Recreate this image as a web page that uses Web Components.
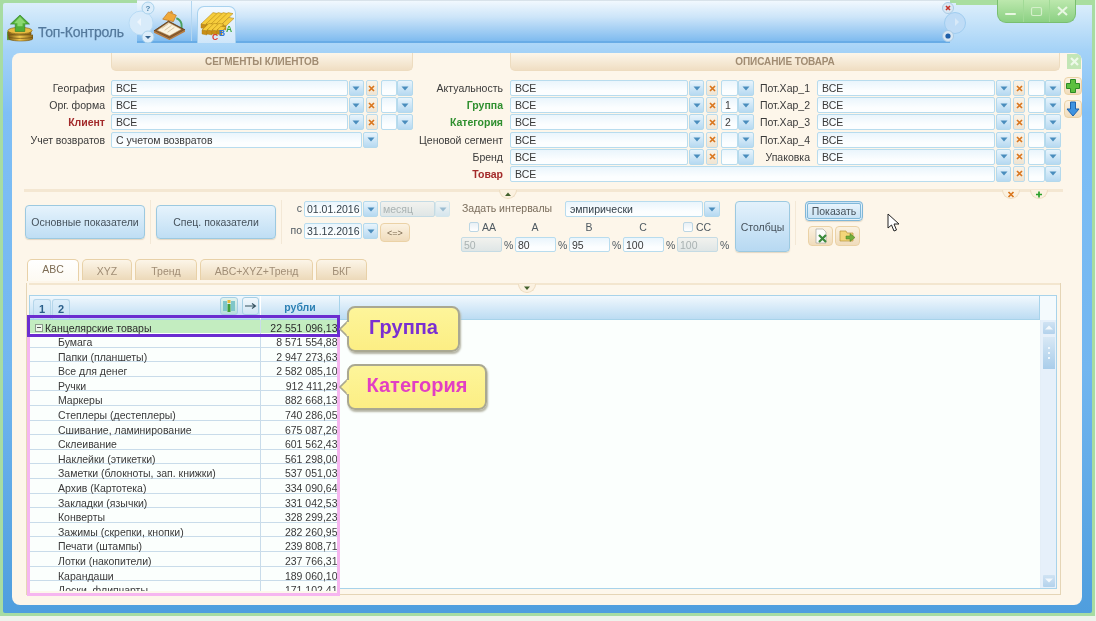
<!DOCTYPE html>
<html lang="ru"><head><meta charset="utf-8"><title>Топ-Контроль</title>
<style>html,body{margin:0;padding:0;background:#eef3ec;overflow:hidden}</style></head>
<body><top-app></top-app>
<script>
const BASE=`*{box-sizing:border-box}:host{font:10.5px "Liberation Sans",Arial,sans-serif;color:#3a3a3a}`;
const TRI=`<svg width="8" height="5" viewBox="0 0 8 5"><path d="M0.5 0.5H7.5L4 4.5Z" fill="#4a8dbd"/></svg>`;
function def(name,css,render){customElements.define(name,class extends HTMLElement{
  connectedCallback(){if(this.shadowRoot)return;const s=this.attachShadow({mode:'open'});
  const a=n=>this.getAttribute(n);s.innerHTML=`<style>${BASE}${css}</style>`+render(a,this);}});}

def('combo-button',`:host{display:flex;align-items:center;justify-content:center;height:100%;width:15px;flex:none;border:1px solid #b4d9ec;border-radius:2px;background:linear-gradient(#e8f4fc,#b6d9f1)}`,()=>TRI);
def('clear-button',`:host{display:flex;align-items:center;justify-content:center;height:100%;width:12px;flex:none;border:1px solid #bcdcec;border-radius:2px;background:linear-gradient(#f9f3e8,#efe4d2)}`,
 ()=>`<svg width="7" height="7" viewBox="0 0 7 7"><path d="M1 1L6 6M6 1L1 6" stroke="#d9761e" stroke-width="1.7"/></svg>`);
def('text-field',`:host{display:flex;align-items:center;height:100%;flex:none;border:1px solid #b8dcee;border-radius:2px;background:linear-gradient(#eaf5fc,#fcfeff 70%);padding-left:4px;white-space:nowrap;overflow:hidden}
 :host([disabled]){background:linear-gradient(#f2f2ee,#dfe6e6);color:#a9b2b2!important;border-color:#c5dbe4;padding-left:2px}`,(a)=>`<slot></slot>`);

def('filter-row',`:host{display:flex;align-items:stretch;height:16px;margin-bottom:1.2px}
 .l{flex:none;text-align:right;line-height:16.5px;white-space:nowrap}.b{font-weight:bold}
 combo-button{margin-left:1px}clear-button{margin-left:2px}.sm{margin-left:3px;display:flex;height:100%}.sm text-field{width:16.5px;padding-left:3px}
 .sm combo-button{margin-left:0;width:16px}`,
 a=>{const lw=a('lw')||93,w=a('w')||178,gap=a('gap')||6;
 return `<span class="l ${a('c')?'b':''}" style="width:${lw}px;margin-right:${gap}px;color:${a('c')||'inherit'}">${a('label')}</span>
 <text-field style="width:${w}px">${a('value')||'ВСЕ'}</text-field><combo-button></combo-button>
 ${a('plain')!==null?'':`<clear-button></clear-button><div class="sm"><text-field>${a('n')||''}</text-field><combo-button></combo-button></div>`}`});

def('section-head',`:host{display:flex;align-items:center;justify-content:center;height:18px;flex:none;font-weight:bold;color:#a18c72;font-size:10px;letter-spacing:-.1px;
 background:linear-gradient(#fcf6ea,#f0dec3);border:1px solid #eddcc0;border-top:0;border-radius:0 0 5px 5px}`,()=>`<slot></slot>`);

def('divider-bar',`:host{display:block;position:relative;height:3px;background:#f4e7d2}
 i{position:absolute;top:1px;width:18px;height:9px;background:#fbf1e0;border:1px solid #eddcc0;border-top:0;border-radius:0 0 9px 9px;display:flex;align-items:center;justify-content:center}`,
 a=>(a('bumps')||'').split(';').filter(Boolean).map(b=>{const [x,k]=b.split(',');
  const ic=k=='up'?`<path d="M1 5L4 1.5L7 5Z" fill="#41602c"/>`:k=='down'?`<path d="M1 1.5H7L4 5Z" fill="#41602c"/>`:k=='x'?`<path d="M1.5 1L6.5 6M6.5 1L1.5 6" stroke="#d9761e" stroke-width="1.7"/>`:`<path d="M4 .5V6.5M1 3.5H7" stroke="#2aa02a" stroke-width="1.7"/>`;
  return `<i style="left:${x}px"><svg width="8" height="7" viewBox="0 0 8 7">${ic}</svg></i>`}).join(''));

def('blue-button',`:host{display:flex;align-items:center;justify-content:center;flex:none;border:1px solid #9cc9e0;border-radius:4px;background:linear-gradient(#e6f3fc,#bfdef4);color:#46525c;font-size:10.5px;box-shadow:0 1px 1px #e3d8c4}`,()=>`<slot></slot>`);
def('tan-button',`:host{display:flex;align-items:center;justify-content:center;flex:none;border:1px solid #ebd2a6;border-radius:4px;background:linear-gradient(#fbf2e2,#f0dcbc);color:#7c6a50;font-size:9px}`,()=>`<slot></slot>`);
def('check-label',`:host{display:flex;align-items:center;justify-content:center;width:54px;height:14px;flex:none;color:#4f5a62;padding-right:14px}
 :host([check]){justify-content:flex-start;padding:0 0 0 8px}
 i{display:block;width:10px;height:10px;border:1px solid #bcd6e4;border-radius:2px;background:linear-gradient(#e8f0f5,#fff);margin-right:3px}`,
 a=>(a('check')!==null?'<i></i>':'')+`<slot></slot>`);
def('pct-input',`:host{display:flex;align-items:center;height:15px;width:54px;flex:none}text-field{width:41px;padding-left:2px}span{margin-left:2px;color:#4f5a62}`,
 a=>`<text-field ${a('disabled')!==null?'disabled':''}>${a('value')}</text-field><span>%</span>`);

def('tab-item',`:host{display:flex;align-items:center;justify-content:center;height:21px;flex:none;margin-right:3px;border:1px solid #e8d1a8;border-bottom:0;border-radius:5px 5px 0 0;background:linear-gradient(#fcf5e8,#ecd9b9);color:#a08d75;padding-top:2px}
 :host([active]){background:linear-gradient(#fff,#fdfaf2);color:#7d6c54;padding:0 0 3px;height:22px;margin-bottom:-1px}`,()=>`<slot></slot>`);

def('data-row',`:host{display:grid;grid-template-columns:231px 78px;height:14.6px;flex:none;line-height:18px;border-bottom:1px solid #c9dcea;color:#3a3a3a}
 :host([group]){height:13.5px;background:#c3edc0;line-height:16px;border-bottom:0;color:#2c2c2c}
 .n{padding-left:28px;white-space:nowrap;overflow:hidden;display:flex;align-items:flex-start;border-right:1px solid #c9dcea;height:100%}
 :host([group]) .n{padding-left:5px;overflow:visible}
 .v{text-align:right;padding-right:1.5px;white-space:nowrap}
 i{display:block;width:8px;height:8px;border:1px solid #8a9a8a;background:#eef7ec;margin:4px 2px 0 0;position:relative;flex:none}
 i:after{content:"";position:absolute;left:1px;right:1px;top:2.5px;height:1px;background:#555}`,
 a=>`<div class="n">${a('group')!==null?'<i></i>':''}<span>${a('name')}</span></div><div class="v">${a('value')}</div>`);

def('call-out',`:host{display:flex;align-items:center;justify-content:center;position:absolute;border:2px solid #a9a892;border-radius:8px;background:linear-gradient(#fdf59a,#fcee84);font:bold 20px "Liberation Sans",Arial,sans-serif;box-shadow:1px 2px 2px #b5b5a5;padding-bottom:4px}
 svg{position:absolute;left:-10px;top:50%;margin-top:-9px}`,
 a=>`<svg width="10" height="18" viewBox="0 0 10 18"><path d="M10 0L1 9L10 18Z" fill="#fcf296" stroke="#a9a892" stroke-width="1.6"/><path d="M9 2V16" stroke="#fcf296" stroke-width="2.5"/></svg><slot></slot>`);

def('scroll-bar',`:host{display:flex;flex-direction:column;width:16px;flex:none;background:#e6f0fa;border-left:1px solid #e4eef7;padding:2px 1px 1px 2px}
 .bt{height:12.5px;background:linear-gradient(#d0e3f3,#b3d2ec);border-radius:1px;display:flex;align-items:center;justify-content:center}
 .th{height:32px;margin-top:3px;background:linear-gradient(#d8e8f5,#a9cdea);display:flex;flex-direction:column;align-items:center;justify-content:center;gap:3px}
 .th b{display:block;width:2px;height:2px;background:#eef6fc}.sp{flex:1}`,
 ()=>`<div class="bt"><svg width="8" height="5"><path d="M0 4.5H8L4 .5Z" fill="#f3f8fc"/></svg></div><div class="th"><b></b><b></b><b></b></div><div class="sp"></div><div class="bt"><svg width="8" height="5"><path d="M0 .5H8L4 4.5Z" fill="#f3f8fc"/></svg></div>`);

def('data-grid',`:host{display:flex;flex-direction:column;width:1028px;height:294.5px;margin:10px 0 0 2px;border:1px solid #a8d3ea;background:#fbfffd}
 .hd{display:flex;height:24px;flex:none}
 .c1{width:231px;flex:none;background:linear-gradient(#f1f8fd,#bcdcf3);border-right:1px solid #fff;border-bottom:1px solid #a8d3ea;display:flex;align-items:flex-end;padding:0 0 0 3px;position:relative}
 .c2{width:78px;flex:none;background:linear-gradient(#f1f8fd,#bcdcf3);border-bottom:1px solid #a8d3ea;text-align:center;color:#2c80b4;font-weight:bold;padding-top:5px}
 .c3{flex:1;background:linear-gradient(#f1f8fd,#bcdcf3);border-left:1px solid #a8d3ea;border-right:1px solid #a8d3ea;border-bottom:1px solid #a8d3ea}
 .c4{width:16px;flex:none;background:#f4fafd}
 .lv{width:18px;height:20px;margin-right:1px;border:1px solid #b5d6ea;border-bottom:0;border-radius:3px 3px 0 0;background:linear-gradient(#dceefa,#c3dff3);font-weight:bold;font-size:11px;color:#2b5f8a;display:flex;align-items:center;justify-content:center}
 .sp{flex:1}
 .ib{width:18px;height:18px;border:1px solid #a6cfe4;border-radius:3px;margin:0 0 4px 4px;display:flex;align-items:center;justify-content:center;background:linear-gradient(#f2f8fc,#cfe5f4)}
 .ib+.ib{margin-right:1px;width:17px}
 .bd{display:flex;flex:1;min-height:0}.rows{width:309px;flex:none;height:calc(100% + 2.5px);overflow:hidden;display:flex;flex-direction:column;background:#fbfffd}.e{flex:1}`,
 (a)=>{const R=[["Бумага","8 571 554,88"],["Папки (планшеты)","2 947 273,63"],["Все для денег","2 582 085,10"],["Ручки","912 411,29"],["Маркеры","882 668,13"],["Степлеры (дестеплеры)","740 286,05"],["Сшивание, ламинирование","675 087,26"],["Склеивание","601 562,43"],["Наклейки (этикетки)","561 298,00"],["Заметки (блокноты, зап. книжки)","537 051,03"],["Архив (Картотека)","334 090,64"],["Закладки (язычки)","331 042,53"],["Конверты","328 299,23"],["Зажимы (скрепки, кнопки)","282 260,95"],["Печати (штампы)","239 808,71"],["Лотки (накопители)","237 766,31"],["Карандаши","189 060,10"],["Доски, флипчарты","171 102,41"]];
 return `<div class="hd"><div class="c1"><div class="lv">1</div><div class="lv">2</div><div class="sp"></div>
 <div class="ib" style="background:linear-gradient(#e2f3ee,#b6dfdc)"><svg width="14" height="14" viewBox="0 0 14 14"><rect x="1" y="2" width="4" height="10" fill="#7fc6c9"/><rect x="9" y="2" width="4" height="10" fill="#7fc6c9"/><rect x="5.5" y="1" width="3" height="3" fill="#e8b93a"/><rect x="5.5" y="5" width="3" height="8" fill="#3f9e3a"/></svg></div>
 <div class="ib"><svg width="13" height="8" viewBox="0 0 13 8"><path d="M1 4H11M8 1.5L11.5 4L8 6.5" fill="none" stroke="#33505f" stroke-width="1.1"/></svg></div></div>
 <div class="c2">рубли</div><div class="c3"></div><div class="c4"></div></div>
 <div class="bd"><div class="rows"><data-row group name="Канцелярские товары" value="22 551 096,13"></data-row>
 ${R.map(r=>`<data-row name="${r[0]}" value="${r[1]}"></data-row>`).join('')}</div><div class="e"></div><scroll-bar></scroll-bar></div>`});

const LOGO=`<svg width="26" height="28" viewBox="0 0 30 30"><defs><linearGradient id="g" x1="0" x2="1"><stop offset="0" stop-color="#7c5c16"/><stop offset=".45" stop-color="#f3c94e"/><stop offset="1" stop-color="#8e6818"/></linearGradient></defs>
 <path d="M0 19H7V29H0Z" fill="#5e9a3c"/><path d="M1 18h27v5c0 2-6 3-13 3s-14-1-14-3Z" fill="url(#g)"/><path d="M2 23h28v4c0 2-7 3-14 3s-14-1-14-3Z" fill="url(#g)" stroke="#6b4e14" stroke-width=".6"/>
 <ellipse cx="15" cy="18" rx="14" ry="3.8" fill="#e8bb3e" stroke="#7c5c16" stroke-width=".7"/><path d="M2 21.5c4 2 21 2 26 0M2 25.5c5 2 22 2 28 0" stroke="#6b4e14" stroke-width=".8" fill="none"/>
 <path d="M15 0L26 10.5H20.5V19H9.5V10.5H4Z" fill="#4fae37" stroke="#2f7d24" stroke-width=".7"/><path d="M15 2L22 9.5H18V13H12V9.5H8Z" fill="#8ad870"/></svg>`;
const BOOK=`<svg width="33" height="30" viewBox="0 0 34 30"><path d="M24 8C30 10 31 17 28 22" fill="none" stroke="#4aa060" stroke-width="2"/><path d="M24 5L16 1.5L10 9L21 11.5Z" fill="#f0a93a" stroke="#b9701a" stroke-width=".7"/><path d="M17 2L19 0L21 3Z" fill="#d98d28"/>
 <path d="M1 21L16 11L33 20L17 29Z" fill="#8a5a2a" stroke="#5a3a18" stroke-width=".8"/><path d="M4.5 20.5L16 12.5L29 19.5L17 26Z" fill="#fbf3df" stroke="#c9b48e" stroke-width=".5"/><path d="M9 18.5l7-5M12 20.5l7-5M15 22.5l7-5" stroke="#c3b08c" stroke-width=".7"/><path d="M1 21L17 29L33 20V22L17 30.5L1 23Z" fill="#b87c40"/></svg>`;
const bar=(x,y,l)=>`<path d="M${x} ${y}L${x+l} ${y-l*.95}L${x+l+5} ${y-l*.95+1}L${x+5} ${y+1}Z" fill="#f6cd3c" stroke="#a87c12" stroke-width=".5"/><path d="M${x} ${y}L${x+5} ${y+1}V${y+5}L${x} ${y+4}Z" fill="#c98f18" stroke="#a87c12" stroke-width=".4"/>`;
const BARS=`<svg width="36" height="33" viewBox="0 0 36 33">${bar(2,15,12)}${bar(7,15,12)}${bar(12,15,12)}${bar(17,15,12)}${bar(22,16,8)}${bar(3,21,7)}${bar(8,21,7)}${bar(13,21,7)}${bar(18,21,4)}
 <g font-family="Liberation Sans" font-weight="bold" font-size="8.5"><text x="27" y="23" fill="#35a535">A</text><text x="20" y="27" fill="#2f76d6">B</text><text x="13" y="31" fill="#e0352a">C</text></g></svg>`;

def('title-bar',`:host{display:flex;height:50px;position:relative;flex:none}
 .lg{width:134px;flex:none;display:flex;align-items:flex-start;padding:10.5px 0 0 4px}
 .lg span{font-size:14px;color:#54799c;margin:10px 0 0 5px;white-space:nowrap;letter-spacing:-.2px;-webkit-text-stroke:.25px #54799c}
 .st{width:813px;flex:none;height:43px;margin-top:-3px;background:linear-gradient(#f1f8fe,#cde5f9 40%,#7fbbef);border-bottom:2px solid #68ace6;border-top:1px solid #d8e2ea;display:flex;padding-left:16px;position:relative}
 .t1{width:38px;padding-top:9px;flex:none}
 .sep{width:1px;background:#b3d6f0;flex:none;margin-right:5px}
 .t2{width:39px;flex:none;height:37px;margin-top:5px;border:1px solid #a8d2ef;border-bottom:0;border-radius:7px 7px 0 0;background:linear-gradient(#f4fafe,#cfe6f9);padding:2px 0 0 1px;margin-bottom:-2px}
 .nav{position:absolute;display:block}
 .wb{position:absolute;left:994px;top:-3px;width:79px;height:23px;display:flex;border-radius:0 0 9px 9px;border:1px solid #79bf70;border-top:0;background:linear-gradient(#bce8ad,#8bd083)}
 .wb div{flex:1;display:flex;align-items:center;justify-content:center;border-right:1px solid #a1da96}.wb div:last-child{border:0}
 .gr{position:absolute;left:953px;right:-3px;top:-3px;height:5px;background:#a9de9f}`,
 ()=>`<div class="lg">${LOGO}<span>Топ-Контроль</span></div>
 <div class="st"><div class="t1">${BOOK}</div><div class="sep"></div><div class="t2">${BARS}</div></div>
 <svg class="nav" style="left:123px;top:-3px" width="34" height="48" viewBox="0 0 34 48"><circle cx="15" cy="23" r="12" fill="#d8ebfa" stroke="#b8dbf5"/><path d="M15 18L11 22L15 26Z" fill="#eef6fd"/><circle cx="22" cy="8" r="6" fill="#dcedfa" stroke="#a9d2ec"/><text x="22" y="11" text-anchor="middle" font-family="Liberation Sans" font-size="8" font-weight="bold" fill="#4a7fa8">?</text><circle cx="22" cy="37" r="6" fill="#dcedfa" stroke="#a9d2ec"/><path d="M19 36H25L22 39Z" fill="#33608a"/></svg>
 <svg class="nav" style="left:930px;top:-3px" width="34" height="48" viewBox="0 0 34 48"><circle cx="22" cy="23" r="10.5" fill="#bfdcf6" stroke="#a0cdf0"/><path d="M22 18L26 22L22 26Z" fill="#d8e9f8"/><circle cx="15" cy="8" r="5.5" fill="#d9e7f3" stroke="#a9cbe5"/><path d="M13 6L17 10M17 6L13 10" stroke="#c8322a" stroke-width="1.6"/><circle cx="15" cy="36" r="5.5" fill="#d9e7f3" stroke="#a9cbe5"/><circle cx="15" cy="36" r="2.6" fill="#1f5fa8"/></svg>
 <div class="gr"></div>
 <div class="wb"><div><svg width="13" height="10"><rect x="1" y="7" width="11" height="2" rx="1" fill="#e8f7e2"/></svg></div><div><svg width="13" height="11"><rect x="1.5" y="1.5" width="10" height="8" rx="1.5" fill="none" stroke="#d4efca" stroke-width="1.2"/></svg></div><div><svg width="13" height="12"><path d="M2 2L11 10M11 2L2 10" stroke="#e8f7e2" stroke-width="2.1"/></svg></div></div>`);

def('filter-panel',`:host{display:block}
 .hs{display:flex;height:18px;padding-left:99px}
 .cl{width:14px;height:15px;margin:1px 0 0 7px;background:#c3e6b6;display:flex;align-items:center;justify-content:center}
 .f{display:flex;margin-top:9px;height:102px;align-items:flex-start}
 .col1{width:401px;flex:none}.wr{flex:none;width:648px}.two{display:flex}
 .side{width:18px;margin:-3px 0 0 2.5px;display:flex;flex-direction:column;gap:5px}
 .side tan-button{height:18px;width:18.5px}
 divider-bar{margin:7px 19px 0 12px}`,
 ()=>{const two=(a,b)=>`<div class="two"><filter-row lw="90" gap="7" ${a}></filter-row><filter-row lw="56.5" gap="7" ${b}></filter-row></div>`;
 return `<div class="hs"><section-head style="width:302px">СЕГМЕНТЫ КЛИЕНТОВ</section-head><section-head style="width:550px;margin-left:97px">ОПИСАНИЕ ТОВАРА</section-head>
 <div class="cl"><svg width="11" height="11"><path d="M2 2L9 9M9 2L2 9" stroke="#eef9ea" stroke-width="2.2"/></svg></div></div>
 <div class="f"><div class="col1"><filter-row w="236.5" label="География"></filter-row><filter-row w="236.5" label="Орг. форма"></filter-row><filter-row w="236.5" c="#a32a2a" label="Клиент"></filter-row><filter-row w="251" plain label="Учет возвратов" value="С учетом возвратов"></filter-row></div>
 <div class="wr">${two('label="Актуальность"','label="Пот.Хар_1"')}${two('c="#2f8f2f" label="Группа" n="1"','label="Пот.Хар_2"')}${two('c="#2f8f2f" label="Категория" n="2"','label="Пот.Хар_3"')}${two('label="Ценовой сегмент"','label="Пот.Хар_4"')}${two('label="Бренд"','label="Упаковка"')}
 <filter-row lw="90" gap="7" w="485" c="#a32a2a" label="Товар"></filter-row></div>
 <div class="side"><tan-button><svg width="16" height="16" viewBox="0 0 16 16"><path d="M5.5 1.5H10.5V5.5H14.5V10.5H10.5V14.5H5.5V10.5H1.5V5.5H5.5Z" fill="#5cc03f" stroke="#2c8a26"/></svg></tan-button>
 <tan-button><svg width="14" height="16" viewBox="0 0 14 16"><path d="M4.5 1H9.5V8H13L7 15L1 8H4.5Z" fill="#3f93e0" stroke="#1d62ad"/></svg></tan-button></div></div>
 <divider-bar bumps="475,up;978,x;1006,plus"></divider-bar>`});

def('tool-bar',`:host{display:flex;align-items:flex-start;height:52px;margin-top:9px;padding-left:13px}
 .v{width:1px;height:44px;background:#f3e8d6;flex:none;margin-top:-1px}
 .d{width:162px;flex:none;display:flex;flex-direction:column;gap:6px;margin-left:6px}
 .r{display:flex;height:16px;align-items:stretch;line-height:15px;color:#4f5a62}
 .r>span{width:14px;text-align:right;margin-right:2px}
 .r text-field{color:#33404a}
 .r combo-button{margin-left:1px}
 .dis{opacity:.55}
 .i{width:271px;flex:none;margin-left:11px;display:flex;flex-direction:column}
 .l{display:flex}.tt{width:104px;color:#7a6d5c;line-height:15px;padding-left:1px}
 .cs{display:flex;margin-top:3px;height:14px}.ps{display:flex;margin-top:3px}
 .ic{display:flex;gap:2px;margin:5px 0 0 3px}
 .ic tan-button{width:25px;height:20px}`,
 ()=>`<blue-button style="width:120px;height:34px;margin-top:4px;margin-right:5px">Основные показатели</blue-button><div class="v"></div>
 <blue-button style="width:120px;height:34px;margin:4px 5px 0 5px">Спец. показатели</blue-button><div class="v"></div>
 <div class="d"><div class="r"><span>с</span><text-field style="width:58px;padding-left:2px">01.01.2016</text-field><combo-button></combo-button>
  <text-field disabled style="width:55px;margin-left:2px">месяц</text-field><combo-button class="dis" style="margin-left:0"></combo-button></div>
  <div class="r"><span>по</span><text-field style="width:58px;padding-left:2px">31.12.2016</text-field><combo-button></combo-button><tan-button style="width:30px;height:19px;margin-left:2px">&lt;=&gt;</tan-button></div></div>
 <div class="i"><div class="l"><span class="tt">Задать интервалы</span><div class="r" style="width:155px"><text-field style="width:138px;color:#33404a">эмпирически</text-field><combo-button style="margin-left:1px;width:16px"></combo-button></div></div>
  <div class="cs"><check-label check>AA</check-label><check-label>A</check-label><check-label>B</check-label><check-label>C</check-label><check-label check style="padding-left:6px">CC</check-label></div>
  <div class="ps"><pct-input disabled value="50"></pct-input><pct-input value="80"></pct-input><pct-input value="95"></pct-input><pct-input value="100"></pct-input><pct-input disabled value="100"></pct-input></div></div>
 <blue-button style="width:55px;height:51px;margin-left:3px;background:linear-gradient(#e3f1fb,#b7d9f2)">Столбцы</blue-button>
 <div class="v" style="margin:0 9px 0 5px"></div>
 <div><blue-button style="width:58px;height:20px;border:3px double #7fb7d8;background:linear-gradient(#e8f4fc,#c8e2f5)">Показать</blue-button>
 <div class="ic"><tan-button><svg width="16" height="16" viewBox="0 0 16 16"><path d="M3 1H10L13 4V15H3Z" fill="#fdfdfb" stroke="#a8a8a0" stroke-width=".7"/><path d="M6 7L13 14M13 7L6 14" stroke="#3c8a3c" stroke-width="2.2"/></svg></tan-button>
 <tan-button><svg width="17" height="15" viewBox="0 0 17 15"><path d="M1 2H7L8 4H14V12H1Z" fill="#f3d679" stroke="#b8953c" stroke-width=".7"/><path d="M7 7H11V4.5L16 8.5L11 12.5V10H7Z" fill="#72ad3a" stroke="#4a7d22" stroke-width=".5"/></svg></tan-button></div></div>`);

def('tab-pane',`:host{display:block;width:1035px;height:312px;margin-left:14px;border:1px solid #e5d5b6;border-top:0;background:#fdf7ec}
 divider-bar{margin:3px 0 0 2px;background:#f3e6cf;height:1.5px}`,
 ()=>`<divider-bar bumps="489,down"></divider-bar><data-grid></data-grid>`);

def('top-app',`:host{display:block;position:relative;width:1096px;height:621px;overflow:hidden;background:#eef3ec;filter:blur(.35px)}
 .fr{width:1095px;height:616px;padding:3px;background:#a7dca2;display:block}
 .in{height:100%;background:linear-gradient(#dceefb,#a4d2f7 48px,#7fbff6 110px,#72b6f0 60%,#4f9ede);display:flex;flex-direction:column;border-radius:2px}
 .pn{margin-left:9px;width:1070px;height:552px;flex:none;border-radius:8px;background:#fdf6ea;overflow:hidden}
 .tabs{display:flex;margin:6px 0 0 15px;height:21px;position:relative;z-index:1}
 .box{position:absolute;left:27px;width:313px}
 .cur{position:absolute;left:887px;top:213px}`,
 ()=>`<div class="fr"><div class="in"><title-bar></title-bar><div class="pn"><filter-panel></filter-panel><tool-bar></tool-bar>
 <div class="tabs"><tab-item active style="width:52px">ABC</tab-item><tab-item style="width:50px">XYZ</tab-item><tab-item style="width:62px">Тренд</tab-item><tab-item style="width:113px">ABC+XYZ+Тренд</tab-item><tab-item style="width:51px">БКГ</tab-item></div>
 <tab-pane></tab-pane></div></div></div>
 <div class="box" style="top:336px;height:260px;border:3px solid #f6b6f0;border-top:0"></div>
 <div class="box" style="top:314.5px;height:22px;border:3px solid #6b2dd0"></div>
 <call-out style="left:347px;top:306px;width:113px;height:46px;color:#7a2fd2">Группа</call-out>
 <call-out style="left:347px;top:364px;width:140px;height:46px;color:#e23fc3">Категория</call-out>
 <svg class="cur" width="13" height="20" viewBox="0 0 13 20"><path d="M1 1V15L4.5 12L7 18L9.5 17L7 11H12Z" fill="#fff" stroke="#222" stroke-width="1"/></svg>`);
</script></body></html>
